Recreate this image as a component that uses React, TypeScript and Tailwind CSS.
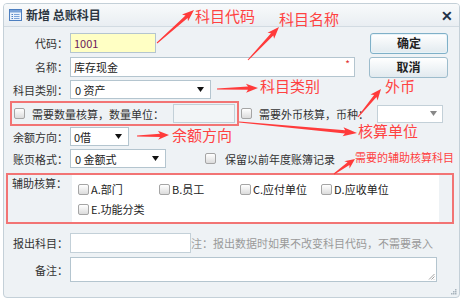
import React from 'react';

type Pt = [number, number];

// tapered arrow, thin at the tail and a barbed head at the tip
const arrowPoints = (tail: Pt, tip: Pt, head = 10, barb = 4.5) => {
  const dx = tip[0] - tail[0];
  const dy = tip[1] - tail[1];
  const len = Math.hypot(dx, dy);
  const ux = dx / len;
  const uy = dy / len;
  const nx = -uy;
  const ny = ux;
  const neck: Pt = [tip[0] - ux * head, tip[1] - uy * head];
  const back: Pt = [tip[0] - ux * (head + 2), tip[1] - uy * (head + 2)];
  const pts: Pt[] = [
    [tail[0] + nx * 0.5, tail[1] + ny * 0.5],
    [neck[0] + nx * 1.6, neck[1] + ny * 1.6],
    [back[0] + nx * barb, back[1] + ny * barb],
    tip,
    [back[0] - nx * barb, back[1] - ny * barb],
    [neck[0] - nx * 1.6, neck[1] - ny * 1.6],
    [tail[0] - nx * 0.5, tail[1] - ny * 0.5],
  ];
  return pts.map((p) => `${p[0].toFixed(1)},${p[1].toFixed(1)}`).join(' ');
};

const arrows: { tail: Pt; tip: Pt; head?: number }[] = [
  { tail: [157, 43], tip: [194, 10] },
  { tail: [248, 60], tip: [279, 27] },
  { tail: [217, 89], tip: [258, 88] },
  { tail: [358, 117], tip: [381, 89], head: 9 },
  { tail: [239, 122], tip: [357, 133], head: 12 },
  { tail: [137, 136], tip: [169, 135], head: 9 },
  { tail: [334, 174], tip: [355, 159], head: 8 },
];

const Check = ({ className = '' }: { className?: string }) => (
  <span className={`inline-block w-[11px] h-[11px] shrink-0 rounded-[2px] border border-[#a5a5a5] bg-linear-to-b from-white to-[#dcdcdc] ${className}`} />
);

const Tri = ({ color = '#111' }: { color?: string }) => (
  <svg width="7" height="5" viewBox="0 0 7 5">
    <path d="M0 0H7L3.5 5Z" fill={color} />
  </svg>
);

const Label = ({ children }: { children: React.ReactNode }) => (
  <div className="w-[65px] shrink-0 text-right text-[#333] pr-[1px]">{children}</div>
);

const AuxItem = ({ text }: { text: string }) => (
  <div className="w-[81px] flex items-center h-[16px]">
    <Check />
    <span className="ml-[2px] text-[#222]">{text}</span>
  </div>
);

export default function App() {
  return (
    <div className="relative w-[464px] h-[302px] bg-white overflow-hidden font-['Noto_Sans_CJK_SC',sans-serif] text-[11px] leading-[16px]">
      <div className="ml-[3px] mt-[3px] w-[457px] h-[295px] border border-[#c4d0d8] rounded-[4px] overflow-hidden flex flex-col bg-[#eef2f5] relative">
        {/* title bar */}
        <div className="h-[23px] shrink-0 flex items-center pl-[5px] pr-[6px] border-b border-[#d2dbe2] bg-linear-to-b from-[#f8fafb] to-[#e9eef2]">
          <svg width="13" height="12" viewBox="0 0 13 12">
            <rect x="0.5" y="0.5" width="12" height="11" fill="#eaf2fb" stroke="#4d7fc0" />
            <rect x="1" y="1" width="11" height="2.5" fill="#7aa3d8" />
            <path d="M2.5 5.5h1.5M2.5 7.5h1.5M2.5 9.5h1.5" stroke="#4d7fc0" />
            <path d="M5 5.5h5.5M5 7.5h5.5M5 9.5h5.5" stroke="#7aa3d8" />
          </svg>
          <span className="ml-[4px] text-[12px] font-bold text-[#2b3540]">新增 总账科目</span>
          <span className="ml-auto text-[14px] font-bold leading-none text-[#1f3147]">✕</span>
        </div>

        {/* body */}
        <div className="flex flex-col">
          <div className="mt-[6px] h-[20px] flex items-center">
            <Label>代码：</Label>
            <div className="ml-[1px] w-[86px] h-[20px] border border-[#b4c5cf] bg-[#ffffc4] pl-[3px] flex items-center text-[#6e1a5c]">1001</div>
            <button className="ml-auto mr-[11px] w-[78px] h-[21px] rounded-[3px] border border-[#7fb0c8] bg-linear-to-b from-white to-[#e2eaef] text-[12px] font-bold text-[#222] shadow-[inset_0_0_0_1px_#e8f3f8]">确定</button>
          </div>

          <div className="mt-[4px] h-[20px] flex items-center">
            <Label>名称：</Label>
            <div className="relative ml-[1px] w-[285px] h-[20px] border border-[#b4c5cf] bg-white pl-[3px] flex items-center text-[#222]">
              库存现金
              <span className="absolute right-[4px] top-[1px] text-[10px] leading-none text-[#e23030]">*</span>
            </div>
            <button className="ml-auto mr-[11px] w-[79px] h-[21px] rounded-[3px] border border-[#9dbccc] bg-linear-to-b from-white to-[#e2eaef] text-[12px] font-bold text-[#222]">取消</button>
          </div>

          <div className="mt-[3px] h-[19px] flex items-center">
            <Label>科目类别：</Label>
            <div className="ml-[1px] w-[141px] h-[19px] border border-[#b4c5cf] bg-white pl-[4px] pr-[6px] flex items-center justify-between text-[#222]">
              <span>0 资产</span>
              <Tri />
            </div>
          </div>

          <div className="mt-[2px] h-[25px] flex items-center">
            <div className="ml-[6px] w-[229px] h-[25px] border-2 border-[#f27474] flex items-center pl-[2px]">
              <Check />
              <span className="ml-[7px] text-[#333]">需要数量核算，数量单位：</span>
              <div className="ml-[9px] w-[62px] h-[19px] border border-[#c3d0d8] bg-[#f2f5f7]" />
            </div>
            <Check className="ml-[2px]" />
            <span className="ml-[7px] text-[#333]">需要外币核算，币种：</span>
            <div className="ml-[8px] w-[66px] h-[18px] border border-[#c3d0d8] bg-white flex items-center justify-end pr-[5px]">
              <Tri color="#888" />
            </div>
          </div>

          <div className="mt-[1px] h-[19px] flex items-center">
            <Label>余额方向：</Label>
            <div className="ml-[1px] w-[59px] h-[19px] border border-[#b4c5cf] bg-white pl-[3px] pr-[6px] flex items-center justify-between text-[#222]">
              <span>0借</span>
              <Tri />
            </div>
          </div>

          <div className="mt-[3px] h-[19px] flex items-center">
            <Label>账页格式：</Label>
            <div className="ml-[1px] w-[96px] h-[19px] border border-[#b4c5cf] bg-white pl-[4px] pr-[6px] flex items-center justify-between text-[#222]">
              <span>0 金额式</span>
              <Tri />
            </div>
            <Check className="ml-[39px]" />
            <span className="ml-[9px] text-[#333]">保留以前年度账簿记录</span>
          </div>

          <div className="mt-[5px] ml-[2px] w-[448px] h-[51px] border-2 border-[#f27474] flex">
            <div className="w-[64px] shrink-0 pl-[4px] text-[#333]">辅助核算：</div>
            <div className="w-[367px] bg-white pl-[6px] pt-[6px] flex flex-col gap-[4px]">
              <div className="flex">
                <AuxItem text="A.部门" />
                <AuxItem text="B.员工" />
                <AuxItem text="C.应付单位" />
                <AuxItem text="D.应收单位" />
              </div>
              <div className="flex">
                <AuxItem text="E.功能分类" />
              </div>
            </div>
          </div>

          <div className="mt-[9px] h-[20px] flex items-center">
            <Label>报出科目：</Label>
            <div className="ml-[1px] w-[121px] h-[20px] border border-[#c3d0d8] bg-white" />
            <span className="text-[#9a9a9a]">注：报出数据时如果不改变科目代码，不需要录入</span>
          </div>

          <div className="mt-[4px] h-[25px] flex items-center">
            <Label>备注：</Label>
            <div className="relative ml-[1px] w-[367px] h-[25px] border border-[#b4c5cf] bg-white">
              <svg className="absolute right-[1px] bottom-[1px]" width="7" height="7" viewBox="0 0 7 7">
                <path d="M1 6.5L6.5 1M3.5 6.5L6.5 3.5M6 6.5L6.5 6" stroke="#888" strokeWidth="0.8" />
              </svg>
            </div>
          </div>
        </div>

        <svg className="absolute right-[2px] bottom-[2px]" width="6" height="6" viewBox="0 0 6 6">
          <rect x="4" y="0" width="1.5" height="1.5" fill="#a8b4bd" />
          <rect x="2" y="2" width="1.5" height="1.5" fill="#a8b4bd" />
          <rect x="4" y="2" width="1.5" height="1.5" fill="#a8b4bd" />
          <rect x="0" y="4" width="1.5" height="1.5" fill="#a8b4bd" />
          <rect x="2" y="4" width="1.5" height="1.5" fill="#a8b4bd" />
          <rect x="4" y="4" width="1.5" height="1.5" fill="#a8b4bd" />
        </svg>
      </div>

      {/* annotations drawn over the screenshot */}
      <svg className="absolute inset-0 pointer-events-none" width="464" height="302" viewBox="0 0 464 302">
        {arrows.map((a, i) => (
          <polygon key={i} points={arrowPoints(a.tail, a.tip, a.head)} fill="#ff3b3b" />
        ))}
      </svg>
      <div className="absolute left-[195px] top-[7px] text-[15px] leading-[18px] text-[#ff4242] pointer-events-none">科目代码</div>
      <div className="absolute left-[279px] top-[10px] text-[15px] leading-[18px] text-[#ff4242] pointer-events-none">科目名称</div>
      <div className="absolute left-[260px] top-[77px] text-[15px] leading-[18px] text-[#ff4242] pointer-events-none">科目类别</div>
      <div className="absolute left-[385px] top-[77px] text-[15px] leading-[18px] text-[#ff4242] pointer-events-none">外币</div>
      <div className="absolute left-[172px] top-[126px] text-[15px] leading-[18px] text-[#ff4242] pointer-events-none">余额方向</div>
      <div className="absolute left-[358px] top-[122px] text-[15px] leading-[18px] text-[#ff4242] pointer-events-none">核算单位</div>
      <div className="absolute left-[355px] top-[150px] text-[11px] leading-[14px] text-[#ff4242] pointer-events-none">需要的辅助核算科目</div>
    </div>
  );
}
